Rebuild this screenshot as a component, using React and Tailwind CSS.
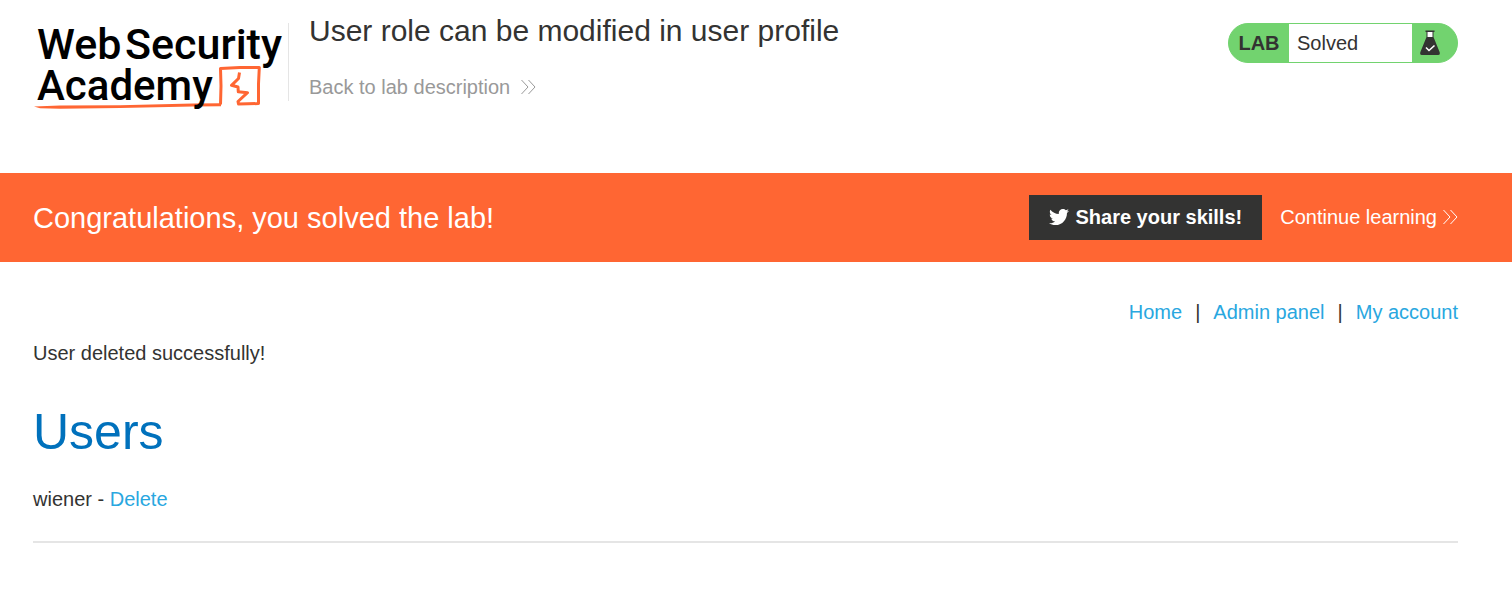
import { FaTwitter } from "react-icons/fa";

function Logo() {
  return (
    <svg
      className="h-[94px] w-[254px] shrink-0"
      viewBox="32 20 254 94"
      role="img"
      aria-label="Web Security Academy"
    >
      <path
        d="M34 106.500L60 105.600L120 105.200L193 103.600L221 103.200L221 106.200L193 106.600L120 108L60 108.800L40 108.200Z"
        fill="#ff6633"
      />
      <path
        d="M220.500 104.500L221 86L220.500 68.500L240 67.500L259.300 67.500L258.500 84L258.500 103.500L248 103.800L238.500 104L238 101.500L247.500 92.700L238.300 91.800L238 87L231.500 85.300L238.500 78.500L239.500 72.500"
        fill="none"
        stroke="#ff6633"
        strokeWidth="3"
        strokeLinejoin="round"
      />
      <g
        fill="#000"
        fontFamily="Roboto, 'Liberation Sans', sans-serif"
        fontWeight="500"
      >
        <text x="37" y="59" fontSize="43">Web</text>
        <text x="125" y="59" fontSize="43">Security</text>
        <text x="37" y="100" fontSize="42">Academy</text>
      </g>
    </svg>
  );
}

function Chevrons() {
  return (
    <svg
      className="h-[16px] w-[15px] shrink-0"
      viewBox="0 0 15 16"
      fill="none"
      stroke="currentColor"
      strokeWidth="1"
      aria-hidden="true"
    >
      <path d="M0.500 1L7 8L0.500 15M7.500 1L14 8L7.500 15" />
    </svg>
  );
}

function Flask() {
  return (
    <svg className="h-[26px] w-[20px]" viewBox="0 0 20 26" aria-hidden="true">
      <path d="M7 1.500H13V7.500H7Z" fill="#fff" />
      <path
        d="M5.500 0.500H14.500V2H13.500V7L19.600 22Q20.500 25 18 25H2Q-0.500 25 0.400 22L6.500 7V2H5.500ZM7.500 2V7H12.500V2Z"
        fill="#333332"
        fillRule="evenodd"
      />
      <path d="M6 17.500L9 20.500L14.500 15.500" fill="none" stroke="#fff" strokeWidth="1.600" />
    </svg>
  );
}

function LabStatus() {
  return (
    <div className="mt-[23px] flex h-10 w-[230px] overflow-hidden rounded-full border border-[#72d36f] bg-[#72d36f]">
      <span className="flex w-[60px] items-center justify-center font-bold">LAB</span>
      <p className="flex flex-1 items-center bg-white pl-2">Solved</p>
      <span className="flex w-[45px] items-center pl-2">
        <Flask />
      </span>
    </div>
  );
}

export default function App() {
  return (
    <div className="min-h-screen bg-white font-['Liberation_Sans',Arial,sans-serif] text-xl leading-6 text-[#333332]">
      <header className="flex items-start justify-between pr-[54px] pb-[59px] pl-8">
        <div className="flex items-start">
          <div className="pt-5">
            <Logo />
          </div>
          <div className="mt-[23px] ml-[2px] h-[78px] w-px bg-[#e5e5e5]" />
          <div className="pt-[13px] pl-5">
            <h1 className="text-[30px] leading-9">User role can be modified in user profile</h1>
            <a href="#lab" className="mt-[26px] flex items-center gap-[11px] text-[#999]">
              Back to lab description
              <Chevrons />
            </a>
          </div>
        </div>
        <LabStatus />
      </header>

      <section className="flex items-center justify-between bg-[#ff6633] py-[22px] pr-[54px] pl-[33px] text-white">
        <h2 className="text-[29px] leading-9">Congratulations, you solved the lab!</h2>
        <div className="flex items-center gap-[18px]">
          <button
            type="button"
            className="flex h-[45px] items-center gap-[6px] bg-[#333332] px-5 pb-[2px] font-bold"
          >
            <FaTwitter aria-hidden="true" />
            Share your skills!
          </button>
          <a href="#continue" className="flex items-center gap-[6px] pb-[2px]">
            Continue learning
            <Chevrons />
          </a>
        </div>
      </section>

      <main className="pt-[38px] pr-[54px] pl-[33px]">
        <nav className="flex justify-end gap-[13px] text-[#29a7df]">
          <a href="#home">Home</a>
          <span className="text-[#333332]">|</span>
          <a href="#admin">Admin panel</a>
          <span className="text-[#333332]">|</span>
          <a href="#account">My account</a>
        </nav>
        <p className="mt-[17px]">User deleted successfully!</p>
        <h1 className="mt-[37px] text-[50px] leading-[60px] text-[#0071bc]">Users</h1>
        <div className="mt-[25px]">
          wiener -{" "}
          <a href="#delete" className="text-[#29a7df]">
            Delete
          </a>
        </div>
        <hr className="mt-[30px] border-t-2 border-[#e5e5e5]" />
      </main>
    </div>
  );
}
